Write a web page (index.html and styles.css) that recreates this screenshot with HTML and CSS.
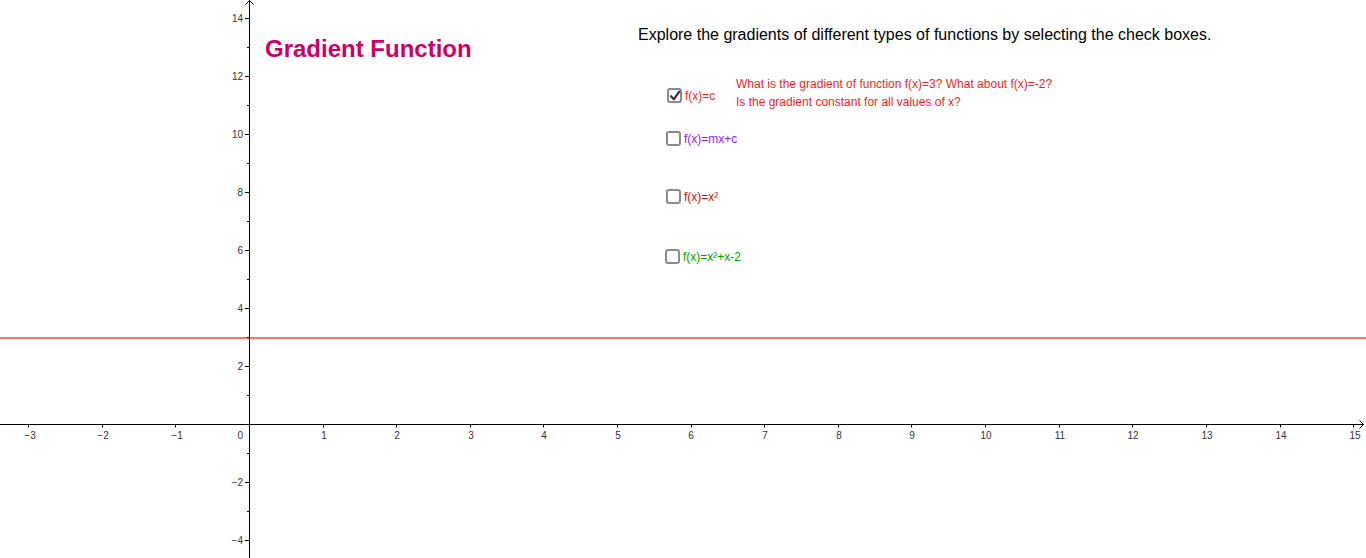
FILE: index.html
```html
<!DOCTYPE html>
<html lang="en">
<head>
<meta charset="utf-8">
<title>Gradient Function</title>
<link rel="stylesheet" href="styles.css">
</head>
<body>
<div class="canvas">
  <svg class="graph" width="1366" height="558" viewBox="0 0 1366 558" xmlns="http://www.w3.org/2000/svg">
    <!-- line f(x)=3 -->
    <line class="fline" x1="0" y1="338" x2="1366" y2="338"/>
    <!-- axes -->
    <path class="axis" d="M249.5 558V0.5M0 424.5H1364"/>
    <path class="axis" d="M245.5 4.5L249.5 0.5L253.5 4.5M1359.5 420.5L1363.5 424.5L1359.5 428.5"/>
    <!-- x ticks -->
    <path class="axis" d="M28.5 424.5v3M102.5 424.5v3M175.5 424.5v3M323.5 424.5v3M396.5 424.5v3M470.5 424.5v3M543.5 424.5v3M617.5 424.5v3M691.5 424.5v3M764.5 424.5v3M838.5 424.5v3M911.5 424.5v3M985.5 424.5v3M1059.5 424.5v3M1132.5 424.5v3M1206.5 424.5v3M1280.5 424.5v3M1353.5 424.5v3"/>
    <!-- y ticks -->
    <path class="axis" d="M245 18.5h4.5M247 47.5h2.5M245 76.5h4.5M247 105.5h2.5M245 134.5h4.5M247 163.5h2.5M245 192.5h4.5M247 221.5h2.5M245 250.5h4.5M247 279.5h2.5M245 308.5h4.5M247 337.5h2.5M245 366.5h4.5M247 395.5h2.5M247 453.5h2.5M245 482.5h4.5M247 511.5h2.5M245 540.5h4.5"/>
    <g class="xlabels">
      <text x="30" y="439">−3</text>
      <text x="103" y="439">−2</text>
      <text x="177" y="439">−1</text>
      <text x="324" y="439">1</text>
      <text x="397" y="439">2</text>
      <text x="471" y="439">3</text>
      <text x="544" y="439">4</text>
      <text x="618" y="439">5</text>
      <text x="691" y="439">6</text>
      <text x="765" y="439">7</text>
      <text x="839" y="439">8</text>
      <text x="912" y="439">9</text>
      <text x="986" y="439">10</text>
      <text x="1060" y="439">11</text>
      <text x="1133" y="439">12</text>
      <text x="1207" y="439">13</text>
      <text x="1281" y="439">14</text>
      <text x="1355" y="439">15</text>
    </g>
    <g class="ylabels">
      <text x="243" y="22">14</text>
      <text x="243" y="80">12</text>
      <text x="243" y="138">10</text>
      <text x="243" y="196">8</text>
      <text x="243" y="254">6</text>
      <text x="243" y="312">4</text>
      <text x="243" y="370">2</text>
      <text x="243" y="439">0</text>
      <text x="243" y="486">−2</text>
      <text x="243" y="544">−4</text>
    </g>
  </svg>

  <h1 class="title">Gradient Function</h1>
  <p class="intro">Explore the gradients of different types of functions by selecting the check boxes.</p>
  <p class="question">What is the gradient of function f(x)=3? What about f(x)=-2?<br>Is the gradient constant for all values of x?</p>

  <label class="check check-1">
    <span class="box checked">
      <svg width="14" height="14" viewBox="0 0 14 14"><path d="M3 7.2L5.8 10.3L11.2 2.6" fill="none" stroke="#333" stroke-width="2.2" stroke-linecap="round" stroke-linejoin="round"/></svg>
    </span>
    <span class="lbl red">f(x)=c</span>
  </label>
  <label class="check check-2">
    <span class="box"></span>
    <span class="lbl purple">f(x)=mx+c</span>
  </label>
  <label class="check check-3">
    <span class="box"></span>
    <span class="lbl crimson">f(x)=x²</span>
  </label>
  <label class="check check-4">
    <span class="box"></span>
    <span class="lbl green">f(x)=x²+x-2</span>
  </label>
</div>
</body>
</html>
```

FILE: styles.css
```css
html, body {
  margin: 0;
  padding: 0;
  background: #ffffff;
  overflow: hidden;
}

.canvas {
  position: relative;
  width: 1366px;
  height: 558px;
  font-family: "Liberation Sans", Arial, sans-serif;
}

.graph {
  position: absolute;
  left: 0;
  top: 0;
  display: block;
}

.axis {
  fill: none;
  stroke: #000;
  stroke-width: 1;
}

.fline {
  stroke: #ff6f6f;
  stroke-width: 2;
}

.xlabels text,
.ylabels text {
  font-family: "Liberation Sans", Arial, sans-serif;
  font-size: 10px;
  fill: #333;
}

.xlabels text {
  text-anchor: middle;
}

.ylabels text {
  text-anchor: end;
}

.title {
  position: absolute;
  left: 265px;
  top: 35px;
  margin: 0;
  font-size: 24px;
  font-weight: bold;
  line-height: normal;
  color: #cc0066;
}

.intro {
  position: absolute;
  left: 638px;
  top: 26px;
  margin: 0;
  font-size: 16px;
  line-height: normal;
  color: #000;
  white-space: nowrap;
}

.question {
  position: absolute;
  left: 736px;
  top: 75px;
  margin: 0;
  font-size: 12px;
  line-height: 18px;
  color: #ff1a1a;
  white-space: nowrap;
}

.check {
  position: absolute;
  display: flex;
  align-items: center;
  gap: 3px;
  font-size: 12px;
  line-height: 14px;
  white-space: nowrap;
}

.check-1 { left: 667px; top: 88px; }
.check-2 { left: 666px; top: 131px; }
.check-3 { left: 666px; top: 189px; }
.check-4 { left: 665px; top: 249px; }

.box {
  box-sizing: border-box;
  width: 15px;
  height: 15px;
  border: 2px solid #8a8a8a;
  border-radius: 3px;
  background: #fff;
  display: flex;
  align-items: center;
  justify-content: center;
  overflow: visible;
}

.box svg {
  display: block;
  flex: none;
}

.red { color: #ff1a1a; }
.purple { color: #8a1aff; }
.crimson { color: #d40f0f; }
.green { color: #00a000; }
```
